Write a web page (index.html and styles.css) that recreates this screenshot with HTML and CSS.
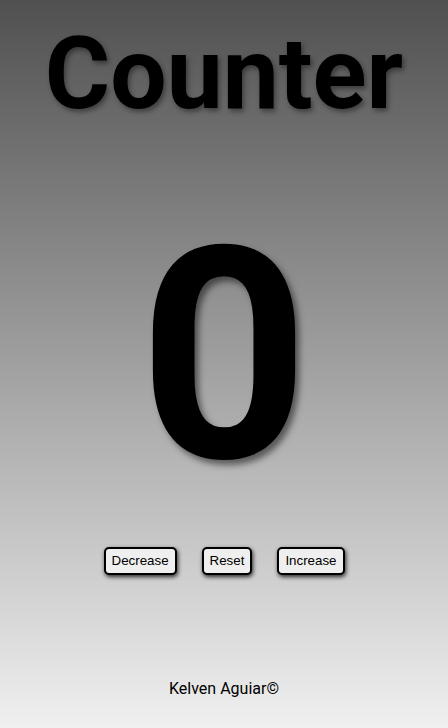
FILE: index.html
```html
<!DOCTYPE html>
<html lang="en">
<head>
<meta charset="utf-8">
<title>Counter</title>
<link rel="stylesheet" href="styles.css">
</head>
<body>
<main class="app">
  <h1 class="title">Counter</h1>
  <div class="value">0</div>
  <div class="controls">
    <button class="btn">Decrease</button>
    <button class="btn">Reset</button>
    <button class="btn">Increase</button>
  </div>
  <footer class="footer">Kelven Aguiar©</footer>
</main>
</body>
</html>
```

FILE: styles.css
```css
html, body {
  margin: 0;
  padding: 0;
  height: 100%;
}
body {
  background: linear-gradient(to bottom, #505050, #f0f0f0);
  font-family: Roboto, "Liberation Sans", sans-serif;
  color: #000;
}
.app {
  display: flex;
  flex-direction: column;
  align-items: center;
  height: 728px;
}
.title {
  margin: 15px 0 0;
  font-size: 100px;
  font-weight: 700;
  line-height: 117px;
  text-shadow: 2px 3px 5px rgba(0, 0, 0, 0.4);
}
.value {
  margin-top: 76px;
  font-size: 296px;
  font-weight: 700;
  line-height: 1;
  height: 296px;
  text-shadow: 4px 5px 6px rgba(0, 0, 0, 0.5);
}
.controls {
  margin-top: 43px;
  display: flex;
  gap: 25px;
}
.btn {
  font-family: "Liberation Sans", Arial, sans-serif;
  font-size: 13.33px;
  line-height: 16px;
  padding: 4px 6px 4px;
  height: 28px;
  background: #efefef;
  color: #000;
  border: 2px solid #000;
  border-radius: 5px;
  box-shadow: 1px 2px 4px rgba(0, 0, 0, 0.8);
}
.footer {
  margin-top: 104px;
  font-size: 16px;
  line-height: 19px;
}
```
